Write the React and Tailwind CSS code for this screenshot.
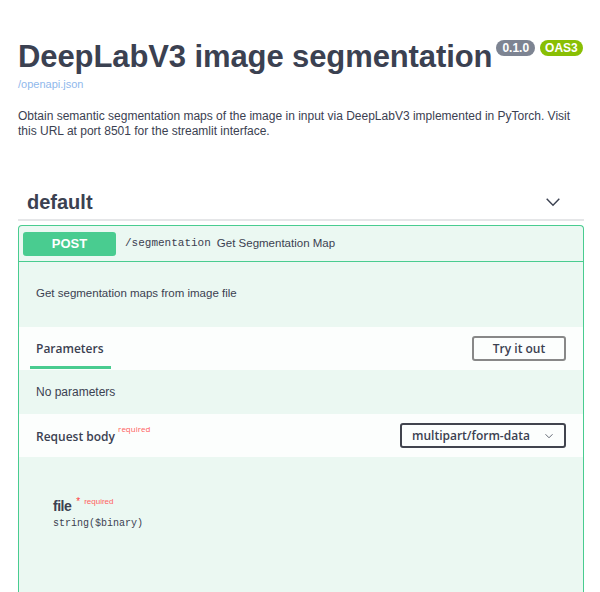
import React from 'react';

const Chevron = ({ className }) => (
  <svg viewBox="0 0 20 20" className={className} fill="none" stroke="currentColor" strokeWidth="1.6">
    <path d="M3 6.5 L10 13.5 L17 6.5" />
  </svg>
);

export default function App() {
  return (
    <div className="min-h-[592px] w-[600px] overflow-hidden bg-white text-[#3b4151] font-['Liberation_Sans',Arial,sans-serif]">
      <div className="pl-[18px] pr-[16px] pt-[37px]">
        {/* info header */}
        <div className="flex items-start">
          <h2 className="text-[31px] leading-[40px] font-bold tracking-[-0.1px]">DeepLabV3 image segmentation</h2>
          <div className="ml-[4px] mt-[3px] flex gap-[5px]">
            <span className="rounded-[8px] bg-[#7d8492] px-[6px] text-[12px] font-bold leading-[16px] text-white">0.1.0</span>
            <span className="rounded-[8px] bg-[#89bf04] px-[5px] text-[12px] font-bold leading-[16px] text-white">OAS3</span>
          </div>
        </div>
        <a className="block text-[11px] leading-[14px] text-[#8fb8ec]">/openapi.json</a>
        <p className="mt-[18px] text-[12px] leading-[15px] text-[#3b4151]">
          Obtain semantic segmentation maps of the image in input via DeepLabV3 implemented in PyTorch. Visit this URL at port 8501 for the streamlit interface.
        </p>

        {/* tag section */}
        <div className="mt-[45px] flex h-[37px] items-center border-b-2 border-[#e5e6e8] pl-[9px] pr-[22px]">
          <h3 className="flex-1 text-[20px] font-bold">default</h3>
          <Chevron className="h-[18px] w-[18px] text-[#3b4151]" />
        </div>

        {/* operation block */}
        <div className="mt-[4px] rounded-t-[4px] border border-b-0 border-[#49cc90] bg-[#ebf8f2]">
          <div className="flex h-[36px] items-center border-b border-[#49cc90] px-[4px]">
            <span className="flex h-[24px] w-[93px] items-center justify-center rounded-[3px] bg-[#49cc90] text-[13px] font-bold text-white">POST</span>
            <span className="ml-[9px] font-['Liberation_Mono',monospace] text-[11px] text-[#3b4151]">/segmentation</span>
            <span className="ml-[6px] text-[11.5px] text-[#3b4151]">Get Segmentation Map</span>
          </div>
          <div className="h-[65px] pl-[17px] pt-[23px] text-[11.5px]">Get segmentation maps from image file</div>

          <div className="flex h-[43px] items-center justify-between bg-[#fcfefd] pl-[11px] pr-[17px] font-['Open_Sans',sans-serif]">
            <div className="flex h-full flex-col justify-end">
              <span className="px-[6px] pb-[8px] text-[12px] font-semibold">Parameters</span>
              <div className="mb-[1px] h-[3px] w-[81px] bg-[#49cc90]" />
            </div>
            <button className="h-[25px] w-[94px] rounded-[3px] border-2 border-[#888] text-[12px] font-semibold">Try it out</button>
          </div>
          <div className="h-[44px] pl-[17px] pt-[13px] text-[12px] text-[#3b4151]">No parameters</div>

          <div className="flex h-[43px] items-center justify-between bg-[#fcfefd] pl-[17px] pr-[17px] font-['Open_Sans',sans-serif]">
            <span className="pt-[2px] text-[12px] font-semibold">
              Request body <sup className="align-super text-[8px] font-normal text-[#ff6060]">required</sup>
            </span>
            <div className="flex h-[25px] w-[166px] items-center justify-between rounded-[3px] border-2 border-[#41444e] px-[10px] text-[12px] font-semibold">
              <span>multipart/form-data</span>
              <Chevron className="h-[10px] w-[10px]" />
            </div>
          </div>

          <div className="h-[140px] pl-[34px] pt-[40px]">
            <div className="flex items-start">
              <span className="text-[14px] font-bold leading-[18px] tracking-[-0.5px]">file</span>
              <span className="ml-[5px] text-[10px] leading-[10px] text-[#ff4040]">*</span>
              <span className="ml-[4px] text-[8px] leading-[10px] text-[#ff6060]">required</span>
            </div>
            <div className="mt-[1px] font-['Liberation_Mono',monospace] text-[10px] text-[#3b4151]">string($binary)</div>
          </div>
        </div>
      </div>
    </div>
  );
}
